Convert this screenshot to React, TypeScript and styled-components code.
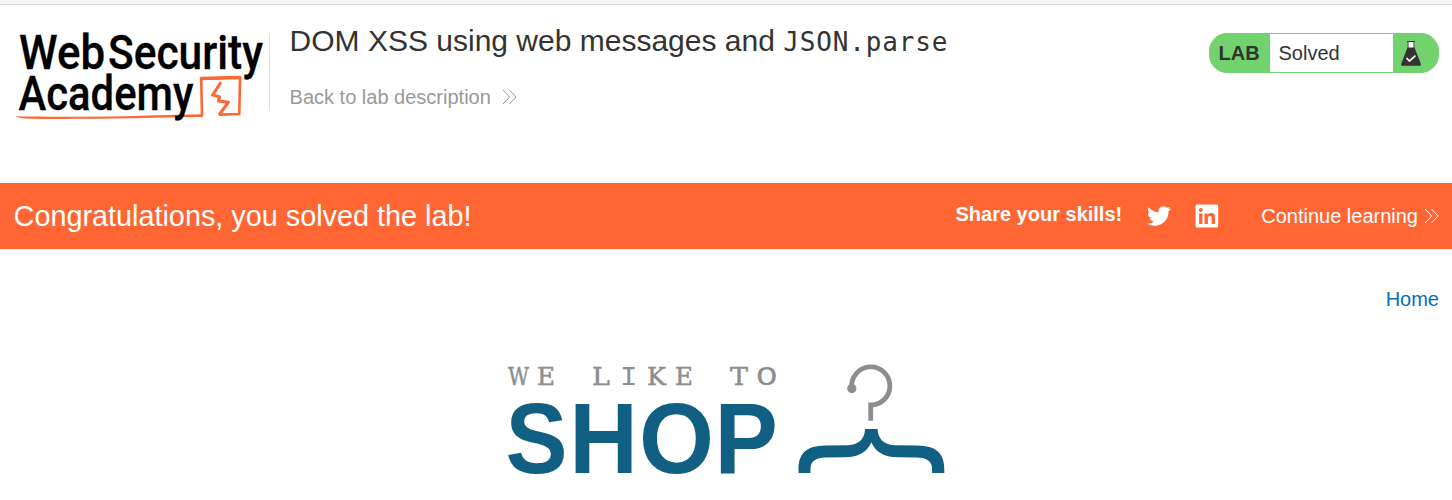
import React from "react";
import styled, { createGlobalStyle } from "styled-components";

const GlobalStyle = createGlobalStyle`
  * { box-sizing: border-box; }
  body {
    margin: 0;
    background: #fff;
    color: #333332;
    font-family: "Liberation Sans", Arial, Helvetica, sans-serif;
    font-size: 20px;
    overflow: hidden;
  }
  svg { display: block; flex: none; overflow: visible; }
`;

const Page = styled.div`
  display: flex;
  flex-direction: column;
  height: 500px;
  overflow: hidden;
`;

const TopStrip = styled.div`
  height: 5px;
  flex: none;
  background: #f5f5f8;
  border-bottom: 1px solid #dadadd;
`;

const Header = styled.header`
  display: flex;
  align-items: flex-start;
  flex: none;
  height: 178px;
  padding-right: 13px;
`;

const LogoLink = styled.a`
  display: block;
  width: 269px;
`;

const TitleBlock = styled.div`
  flex: 1;
  height: 78px;
  margin-top: 28px;
  padding-left: 19.6px;
  border-left: 1px solid #e0e0e0;
`;

const Title = styled.h2`
  margin: -10px 0 0;
  font-size: 30px;
  font-weight: 400;
  line-height: 36px;
  white-space: nowrap;
`;

const Code = styled.code`
  font-family: "DejaVu Sans Mono", monospace;
  font-size: 26px;
  letter-spacing: 0.85px;
`;

const TextLink = styled.a<{ $color: string; $gap?: number }>`
  display: inline-flex;
  align-items: center;
  gap: ${({ $gap = 0 }) => $gap}px;
  color: ${({ $color }) => $color};
  line-height: 24px;
  white-space: nowrap;
  text-decoration: none;
`;

const BackRow = styled.div`
  margin-top: 25px;
`;

const Status = styled.div`
  display: flex;
  width: 230px;
  height: 40px;
  margin-top: 28px;
  border: 1px solid #72d26e;
  border-radius: 18px;
  background: #72d26e;
  line-height: 38px;
  overflow: hidden;
`;

const StatusLabel = styled.span`
  width: 60px;
  padding-left: 8.5px;
  font-weight: 700;
`;

const StatusValue = styled.span`
  width: 123px;
  padding-left: 8.5px;
  background: #fff;
`;

const StatusIcon = styled.span`
  padding: 6px 0 0 7px;
`;

const Banner = styled.section`
  display: flex;
  align-items: center;
  flex: none;
  height: 66px;
  padding: 0 13px 0 13.6px;
  background: #ff6633;
  color: #fff;
`;

const BannerMessage = styled.h4`
  flex: 1;
  margin: 0;
  font-size: 28.8px;
  font-weight: 400;
`;

const Share = styled.div`
  display: flex;
  align-items: center;
  gap: 24px;
  margin-right: 42.5px;
`;

const ShareLabel = styled.span`
  padding-bottom: 4px;
  margin-right: 0.5px;
  font-weight: 700;
`;

const Nav = styled.nav`
  display: flex;
  justify-content: flex-end;
  flex: none;
  padding: 38px 13px 0 0;
`;

const ShopLogo = styled.div`
  display: flex;
  justify-content: center;
  padding-top: 49px;
`;

const DoubleChevron = ({ color }: { color: string }) => (
  <svg width="15" height="16" viewBox="0 0 15 16" fill="none" stroke={color} strokeWidth="1">
    <path d="M1 1l6.7 7L1 15M7.4 1l6.7 7-6.700 7" />
  </svg>
);

const AcademyLogo = () => (
  <svg width="269" height="130" viewBox="0 5 269 130" fontFamily="Roboto, sans-serif" fontWeight="500" fontSize="48">
    <g fill="none" stroke="#ff6633" strokeLinejoin="round" strokeLinecap="round">
      <path d="M202 115.500l-.8-36.700 38.800-1-.7 36.200-19.300.6" strokeWidth="2.600" />
      <path d="M201.300 78.500l38.500-1.100" strokeWidth="3.300" />
      <path d="M220.300 83.200l-7.800 11.900 7 1.500-1 4.400 10 1.200-8.800 11.800" strokeWidth="3" />
    </g>
    <path d="M15 116.300c30 .6 62 .5 96 .1 34-.6 63-1.700 91-2.200v2.700c-31 .1-61 1.200-91 1.700-36 .5-62 .6-86-.1-4-.4-7-1-10-2.200z" fill="#ff6633" />
    <g fill="#000" stroke="#000" strokeWidth=".3">
      <text x="19" y="69" textLength="86" lengthAdjust="spacingAndGlyphs">Web</text>
      <text x="108" y="69" textLength="155" lengthAdjust="spacingAndGlyphs">Security</text>
      <text x="18.5" y="110" textLength="175" lengthAdjust="spacingAndGlyphs">Academy</text>
    </g>
  </svg>
);

const Flask = () => (
  <svg width="22" height="26" viewBox="0 0 22 26">
    <path d="M7.5 2h7v6h-7z" fill="#fff" />
    <path d="M7 1.500h8M8 2v6.500M14 2v6.500" stroke="#333332" fill="none" />
    <path d="M7.500 7.500h7l6.300 16.200c.4 1.200-.2 2.100-1.300 2.100h-17c-1.100 0-1.700-.9-1.300-2.100z" fill="#333332" />
    <path d="M6.500 18l3 3 6-5.300" stroke="#fff" strokeWidth="1.700" fill="none" />
  </svg>
);

const Twitter = () => (
  <svg width="24" height="24" viewBox="0 0 24 24" fill="#fff">
    <path d="M23.953 4.57a10 10 0 01-2.825.775 4.958 4.958 0 002.163-2.723c-.951.555-2.005.959-3.127 1.184a4.92 4.92 0 00-8.384 4.482C7.69 8.095 4.067 6.13 1.64 3.162a4.822 4.822 0 00-.666 2.475c0 1.71.87 3.213 2.188 4.096a4.904 4.904 0 01-2.228-.616v.06a4.923 4.923 0 003.946 4.827 4.996 4.996 0 01-2.212.085 4.936 4.936 0 004.604 3.417 9.867 9.867 0 01-6.102 2.105c-.39 0-.779-.023-1.17-.067a13.995 13.995 0 007.557 2.209c9.053 0 13.998-7.496 13.998-13.985 0-.21 0-.42-.015-.63A9.935 9.935 0 0024 4.59z" />
  </svg>
);

const LinkedIn = () => (
  <svg width="24" height="24" viewBox="0 0 24 24">
    <rect x=".6" y=".6" width="22.6" height="22.8" rx="1.5" fill="#fff" />
    <g fill="#ff6633">
      <circle cx="5.8" cy="5.9" r="2" />
      <path d="M4.1 9.4h3.4V20H4.1zM9.5 9.4h3.2v1.5c.7-1.1 1.8-1.8 3.3-1.8 3.4 0 4 2.2 4 5.1V20h-3.3v-5.2c0-1.5-.1-2.8-1.7-2.8s-2.1 1.1-2.1 2.7V20H9.5z" />
    </g>
  </svg>
);

interface Letter {
  glyph: string;
  x: number;
  width: number;
  mono?: boolean;
}

const tagline: Letter[] = [
  { glyph: "W", x: 508, width: 21 },
  { glyph: "E", x: 537, width: 18 },
  { glyph: "L", x: 592, width: 18 },
  { glyph: "I", x: 620, width: 17.5, mono: true },
  { glyph: "K", x: 647, width: 19 },
  { glyph: "E", x: 675, width: 18 },
  { glyph: "T", x: 730, width: 18 },
  { glyph: "O", x: 756, width: 21.5, mono: true },
];

const wordmark: Letter[] = [
  { glyph: "S", x: 505.5, width: 62 },
  { glyph: "H", x: 569.3, width: 68.6 },
  { glyph: "O", x: 639, width: 75 },
  { glyph: "P", x: 714.6, width: 63.4 },
];

const WeLikeToShop = () => (
  <svg width="440" height="120" viewBox="506 360 440 120">
    <g fill="#8c8d8f" stroke="#8c8d8f">
      {tagline.map(({ glyph, x, width, mono }) => (
        <text
          key={x}
          x={x}
          y="384.5"
          fontFamily={mono ? "'Liberation Mono', monospace" : "'DejaVu Serif', serif"}
          fontSize={mono ? 27.5 : 25}
          strokeWidth={mono ? 0 : 0.5}
          textLength={width}
          lengthAdjust="spacingAndGlyphs"
        >
          {glyph}
        </text>
      ))}
    </g>
    <g fill="#115f83" fontFamily="'Liberation Sans', Arial, sans-serif" fontWeight="700" fontSize="100">
      {wordmark.map(({ glyph, x, width }) => (
        <text key={glyph} x={x} y="473.3" textLength={width} lengthAdjust="spacingAndGlyphs">
          {glyph}
        </text>
      ))}
    </g>
    <path d="M851.800 388a19.100 19.100 0 1 1 18.900 17V420.800" fill="none" stroke="#8c8d8f" strokeWidth="4.800" />
    <circle cx="851.8" cy="388.6" r="4.6" fill="#8c8d8f" />
    <path
      d="M865 429h12.600c0 9 6 16 17 16.200l23 .3c18 .4 26.700 7 26.700 24V473h-12.200v-3.800c0-8-5-11.300-15.500-11.600l-19-.4c-14-.4-22-5-26.200-15-4.500 10-12.400 14.600-26.400 15l-19 .4c-10.500.3-15.500 3.600-15.500 11.600V473h-12v-3.500c0-17 8.700-23.600 26.700-24l23-.3c11-.2 16.800-7.200 16.800-16.200z"
      fill="#115f83"
    />
  </svg>
);

export default function App() {
  return (
    <Page>
      <GlobalStyle />
      <TopStrip />
      <Header>
        <LogoLink>
          <AcademyLogo />
        </LogoLink>
        <TitleBlock>
          <Title>
            DOM XSS using web messages and <Code>JSON.parse</Code>
          </Title>
          <BackRow>
            <TextLink $color="#999" $gap={11}>
              Back to lab description
              <DoubleChevron color="#999" />
            </TextLink>
          </BackRow>
        </TitleBlock>
        <Status>
          <StatusLabel>LAB</StatusLabel>
          <StatusValue>Solved</StatusValue>
          <StatusIcon>
            <Flask />
          </StatusIcon>
        </Status>
      </Header>
      <Banner>
        <BannerMessage>Congratulations, you solved the lab!</BannerMessage>
        <Share>
          <ShareLabel>Share your skills!</ShareLabel>
          <Twitter />
          <LinkedIn />
        </Share>
        <TextLink $color="#fff" $gap={6}>
          Continue learning
          <DoubleChevron color="#fff" />
        </TextLink>
      </Banner>
      <Nav>
        <TextLink $color="#0070bd">Home</TextLink>
      </Nav>
      <ShopLogo>
        <WeLikeToShop />
      </ShopLogo>
    </Page>
  );
}
